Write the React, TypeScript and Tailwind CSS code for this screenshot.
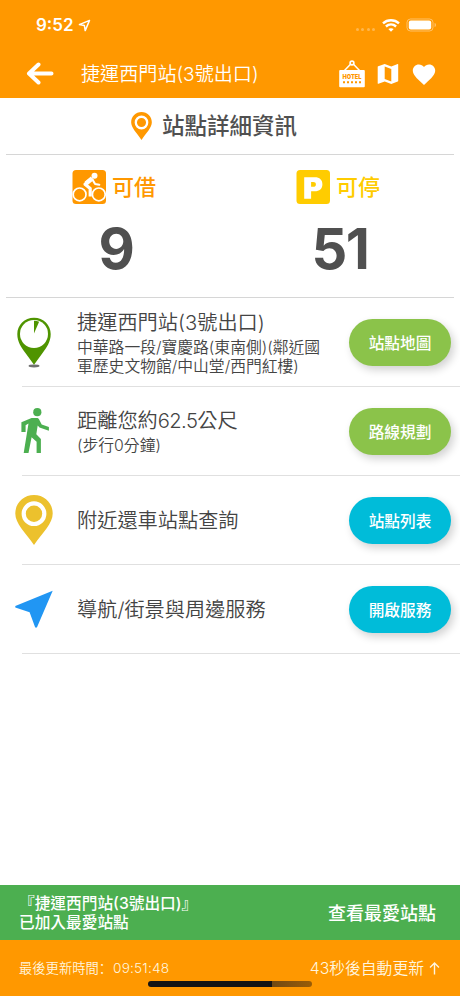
import type { ReactNode } from 'react';

const BicycleIcon = () => (
  <svg width="34" height="34" viewBox="0 0 34 34" fill="none">
    <rect x="0.5" y="0" width="33.5" height="34" rx="3.5" fill="#ff9800" />
    <g stroke="#fff">
      <circle cx="7.600" cy="24.400" r="6.400" strokeWidth="1.700" />
      <circle cx="26.800" cy="24.400" r="6.400" strokeWidth="1.700" />
      <path d="M19.200 9 13 14.200l5.200 4.200v8.200" strokeWidth="3.200" strokeLinejoin="round" />
      <path d="M20.300 8.300 14 13.500" strokeWidth="4.600" />
      <path d="m20.300 9.300 2.800 4.700 4.200.7" strokeWidth="2.100" strokeLinejoin="round" strokeLinecap="round" />
    </g>
    <circle cx="22.500" cy="5.700" r="3" fill="#fff" />
  </svg>
);

const ParkingIcon = () => (
  <svg width="34" height="34" viewBox="0 0 34 34">
    <rect x="0.5" y="0" width="33.500" height="34" rx="3.500" fill="#ffcc00" />
    <path
      fillRule="evenodd"
      d="M8.200 7.200h10.600c5 0 7.600 2.700 7.600 7s-2.800 7.100-7.800 7.100h-3.500v7.500H8.200zM15.100 12v4.800h2.100c1.800 0 2.700-.8 2.700-2.400S19 12 17.200 12z"
      fill="#fff"
    />
  </svg>
);

const RingPin = ({ w, h, color }: { w: number; h: number; color: string }) => (
  <svg width={w} height={h} viewBox="0 0 38 50" preserveAspectRatio="none">
    <path d="M19 0C8.500 0 .3 8 .3 18.500.3 28.500 10 37 19 50c9-13 18.700-21.500 18.700-31.500C37.700 8 29.500 0 19 0z" fill={color} />
    <circle cx="19" cy="18.700" r="10.300" fill="none" stroke="#fff" strokeWidth="4.200" />
  </svg>
);

const GaugePin = () => (
  <svg width="36" height="51" viewBox="0 0 36 51">
    <ellipse cx="18" cy="49" rx="5.500" ry="1.400" fill="#707070" />
    <path d="M18 .7C8.500.7 1.300 8 1.300 17c0 8 4 13.500 8.500 19.500L18 47.700l8.200-11.200C30.700 30.500 34.700 25 34.700 17 34.700 8 27.500.7 18 .7z" fill="#4f9400" />
    <circle cx="18" cy="17" r="14" fill="#fff" />
    <path d="M18 16.500V3.800c2 0 3.700.4 5.100 1z" fill="#4f9400" />
  </svg>
);

const WalkIcon = () => (
  <svg className="ml-[2px]" width="28" height="46" viewBox="0 0 28 46" fill="#4caf50">
    <circle cx="16.300" cy="4.200" r="4.100" />
    <path d="M10.600 10h5.200c1 0 1.700.5 2.200 1.300l2.700 5.300 7.200 2.500v3.700L18.500 19.600l-1.800-2.200-1.400 8.800 4.600 4.900v14h-4.300V33.800l-5-4.500-3.100 15.800H2.700L7.500 15.500l-2.900 1.700v6.900H.4v-9.900z" />
  </svg>
);

const NavigationIcon = () => (
  <svg width="38" height="38" viewBox="0 0 38 38">
    <path d="M37.700.7.3 15.900v1.500l14.300 4.800 5.600 15.300h1.700z" fill="#2196f3" />
  </svg>
);

const HotelIcon = () => (
  <svg width="26" height="28" viewBox="0 0 26 28">
    <circle cx="13" cy="3" r="1.900" fill="none" stroke="#fff" strokeWidth="1.600" />
    <path d="m11.500 4.300-6 6.200m9-6.200 6 6.200" stroke="#fff" strokeWidth="1.500" />
    <rect x="0.200" y="10" width="25.600" height="17.200" rx="1" fill="#fff" />
    <text x="13" y="18.700" textAnchor="middle" textLength="19" lengthAdjust="spacingAndGlyphs" fontSize="6.500" fontWeight="900" fontFamily="Inter, sans-serif" fill="#ff9800">HOTEL</text>
    <path d="M4 22.200h18.500" stroke="#ff9800" strokeWidth="2" strokeDasharray="2 2" />
  </svg>
);

const StatusBar = () => (
  <div className="flex h-[50px] shrink-0 items-center pl-[36px] pr-[23px] text-white">
    <span className="text-[17px] font-semibold leading-none">9:52</span>
    <svg className="ml-[4px]" width="13" height="13" viewBox="0 0 13 13" fill="none">
      <path d="M11.500 1.400 1.400 5.600l5 1 .8 5z" stroke="#fff" strokeWidth="1.500" strokeLinejoin="round" />
    </svg>
    <div className="ml-auto flex items-center">
      <div className="mr-[7px] mt-[9px] flex gap-[2.500px] opacity-30">
        <i className="size-[3px] rounded-full bg-white" />
        <i className="size-[3px] rounded-full bg-white" />
        <i className="size-[3px] rounded-full bg-white" />
        <i className="size-[3px] rounded-full bg-white" />
      </div>
      <svg width="18" height="13" viewBox="0 0 18 13" fill="none" stroke="#fff" strokeWidth="2.400">
        <path d="M1 4.400c4.500-4.200 11.500-4.200 16 0" />
        <path d="M3.900 7.500c3-2.700 7.200-2.700 10.200 0" />
        <path d="m6.300 10.100 2.700 2.700 2.700-2.700c-1.600-1.300-3.800-1.300-5.400 0z" fill="#fff" stroke="none" />
      </svg>
      <svg className="ml-[6px]" width="31" height="14" viewBox="0 0 31 14">
        <rect x="1" y="1" width="26" height="12" rx="3.500" fill="none" stroke="#fff" strokeOpacity=".4" />
        <rect x="2.800" y="2.500" width="22.400" height="9" rx="2" fill="#fff" />
        <path d="M28.600 5v4c1-.4 1.300-1.100 1.300-2s-.3-1.600-1.300-2z" fill="#fff" fillOpacity=".45" />
      </svg>
    </div>
  </div>
);

const TopBar = () => (
  <div className="flex h-[48px] items-center pl-[26px] pr-[24px] text-white">
    <svg width="28" height="24" viewBox="0 0 28 24" fill="none" stroke="#fff" strokeWidth="4" strokeLinecap="round" strokeLinejoin="round">
      <path d="M12.500 2.500 3 11.500l9.500 9M3.500 11.500H25.500" />
    </svg>
    <h1 className="ml-[27px] whitespace-nowrap pt-px text-[19.100px] font-[350] leading-none">捷運西門站(3號出口)</h1>
    <div className="ml-auto flex items-center">
      <HotelIcon />
      <svg className="ml-[12px]" width="22" height="22" viewBox="0 0 22 22">
        <path
          fillRule="evenodd"
          d="m21 1-.3.100L14.300 3.600 7.700 1 1.200 3.200c-.3.100-.5.300-.5.600v16.500c0 .4.300.6.700.500l6.300-2.400 6.600 2.500 6.400-2.300c.3-.1.500-.3.500-.6V1.600c0-.4-.1-.6-.2-.6zM14.300 18.600l-6.600-2.500V3.400l6.600 2.500z"
          fill="#fff"
        />
      </svg>
      <svg className="ml-[13px]" width="24" height="21" viewBox="0 0 24 21">
        <path d="m12 21-1.600-1.500C4.600 14.300.8 10.900.8 6.600.8 3.200 3.500.5 6.900.5c2 0 3.900.9 5.100 2.400C13.200 1.400 15.100.5 17.100.5c3.400 0 6.100 2.700 6.100 6.100 0 4.300-3.800 7.700-9.600 12.900z" fill="#fff" />
      </svg>
    </div>
  </div>
);

const Counter = ({ icon, label, value, color, offset }: { icon: ReactNode; label: string; value: string; color: string; offset: string }) => (
  <div className={`flex flex-col ${offset}`}>
    <div className={`flex items-center gap-[6px] text-[22px] font-medium leading-none ${color}`}>
      {icon}
      <span>{label}</span>
    </div>
    <div className="mt-[13px] w-[88px] text-center text-[56px] font-bold leading-[64px] tracking-[-1.500px] text-[#505050]">{value}</div>
  </div>
);

const Row = ({ icon, title, detail, action, color }: { icon: ReactNode; title: ReactNode; detail?: ReactNode; action: string; color: string }) => (
  <li>
    <div className="flex h-[88px] items-center pr-[9px]">
      <div className="flex w-[68px] shrink-0 justify-center">{icon}</div>
      <div className="ml-[9px] flex-1 whitespace-nowrap pt-px font-[350] text-[#444444]">
        <div className="text-[20.200px] leading-[27px]">{title}</div>
        {detail && <div className="mt-[3px] text-[15.800px] leading-[18.500px]">{detail}</div>}
      </div>
      <button className={`h-[47px] w-[102px] shrink-0 rounded-full pt-[3px] text-[15.700px] font-medium text-white shadow-[3px_4px_8px_rgba(0,0,0,0.18)] ${color}`}>{action}</button>
    </div>
    <div className="ml-[22px] h-px bg-[#e0e0e0]" />
  </li>
);

export default function App() {
  return (
    <div className="flex h-[996px] w-[460px] flex-col overflow-hidden bg-white font-[Inter,'Noto_Sans_CJK_TC',sans-serif]">
      <header className="h-[98px] shrink-0 bg-[#ff9800]">
        <StatusBar />
        <TopBar />
      </header>

      <main className="flex-1">
        <section className="px-[6px]">
          <div className="flex h-[57px] items-center border-b border-[#d6d6d6] pl-[125px]">
            <RingPin w={21} h={28} color="#ff9800" />
            <h2 className="ml-[10px] pt-px text-[22.500px] font-medium leading-none text-[#505050]">站點詳細資訊</h2>
          </div>
          <div className="flex h-[143px] border-b border-[#d6d6d6] pt-[15px]">
            <Counter icon={<BicycleIcon />} label="可借" value="9" color="text-[#ff9800]" offset="w-[224px] pl-[66px]" />
            <Counter icon={<ParkingIcon />} label="可停" value="51" color="text-[#ffcc00]" offset="pl-[66px]" />
          </div>
        </section>

        <ul>
          <Row
            icon={<GaugePin />}
            title="捷運西門站(3號出口)"
            detail={<>中華路一段/寶慶路(東南側)(鄰近國<br />軍歷史文物館/中山堂/西門紅樓)</>}
            action="站點地圖"
            color="bg-[#8bc34a]"
          />
          <Row
            icon={<WalkIcon />}
            title={<>距離您約<span className="tracking-[-0.600px]">62.5</span>公尺</>}
            detail="(步行0分鐘)"
            action="路線規劃"
            color="bg-[#8bc34a]"
          />
          <Row icon={<RingPin w={38} h={50} color="#ecc12d" />} title="附近還車站點查詢" action="站點列表" color="bg-[#00bcd9]" />
          <Row icon={<NavigationIcon />} title="導航/街景與周邊服務" action="開啟服務" color="bg-[#00bcd9]" />
        </ul>
      </main>

      <div className="flex h-[55px] shrink-0 items-center justify-between bg-[#4caf50] pl-[19px] pr-[24px] text-white">
        <p className="pt-[2px] text-[15.700px] font-medium leading-[18.500px]">『捷運西門站(3號出口)』<br />已加入最愛站點</p>
        <button className="pt-px text-[18px] font-medium">查看最愛站點</button>
      </div>

      <footer className="relative h-[56px] shrink-0 bg-[#ff9800] text-[#fff5df]">
        <div className="flex h-[56px] items-center justify-between pl-[19px] pr-[20px] pt-px font-[350]">
          <span className="text-[13.300px]">
            最後更新時間<span className="font-['Noto_Sans_CJK_SC',sans-serif]">：</span>
            <span className="ml-px text-[13.700px] tracking-[0.150px]">09:51:48</span>
          </span>
          <span className="flex items-center text-[15.800px]">
            43秒後自動更新
            <svg className="ml-[5px]" width="11" height="13" viewBox="0 0 11 13" fill="none" stroke="#fff5df" strokeWidth="1.400">
              <path d="M5.500 12.500V1M1 5.500 5.500 1 10 5.500" />
            </svg>
          </span>
        </div>
        <div className="absolute bottom-[9px] left-[148px] flex h-[6px] w-[164px] overflow-hidden rounded-full">
          <div className="w-[124px] bg-[#141414]" />
          <div className="flex-1 bg-gradient-to-r from-[#704912] to-[#9b5d05]" />
        </div>
      </footer>
    </div>
  );
}
